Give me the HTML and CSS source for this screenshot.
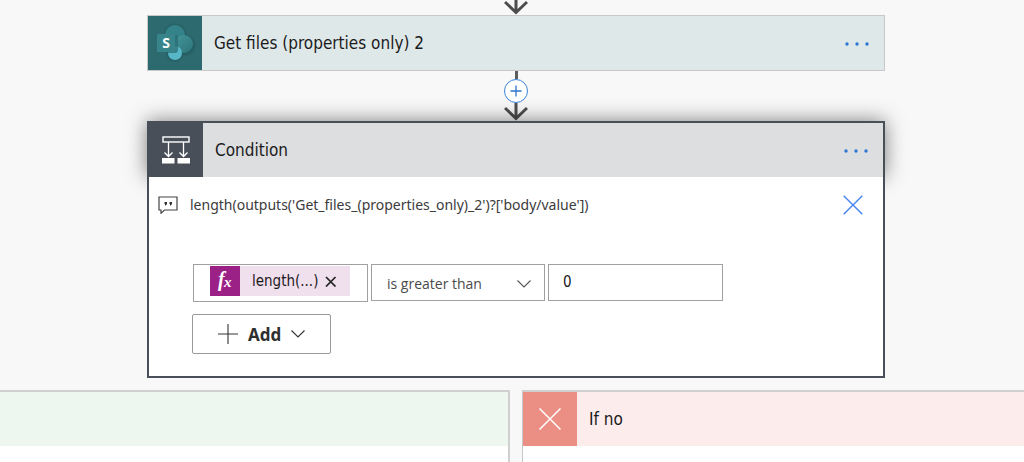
FILE: index.html
```
<!DOCTYPE html>
<html lang="en">
<head>
<meta charset="utf-8">
<title>Flow designer</title>
<link rel="stylesheet" href="styles.css">
</head>
<body>
<main class="flow">
	<svg class="arrow arrow-top" viewBox="0 0 24 15" width="24" height="15">
		<path d="M12 0V13M1 2L12 12.500L23 2"/>
	</svg>

	<section class="card action">
		<header class="card-header">
			<span class="card-icon">
				<svg viewBox="0 0 54 54" width="54" height="54">
					<defs>
						<radialGradient id="glow">
							<stop offset="60%" stop-color="#1d5257" stop-opacity=".7"/>
							<stop offset="100%" stop-color="#1d5257" stop-opacity="0"/>
						</radialGradient>
						<linearGradient id="disc" x1="0" y1="0" x2="1" y2="1">
							<stop offset="0" stop-color="#449599"/>
							<stop offset="1" stop-color="#2c7479"/>
						</linearGradient>
					</defs>
					<circle cx="27" cy="19" r="13" fill="url(#glow)"/>
					<circle cx="37" cy="29" r="12" fill="url(#glow)"/>
					<circle cx="27" cy="37" r="10" fill="url(#glow)"/>
					<circle cx="27" cy="19" r="10" fill="#35838a"/>
					<circle cx="36" cy="28" r="9" fill="url(#disc)"/>
					<circle cx="27" cy="37" r="7" fill="#58b7c6"/>
					<path d="M20 19h10v15q0 3-3 3h-7z" fill="#286970" opacity=".7"/>
					<rect x="9" y="18" width="18" height="18" rx="1" fill="#37858a"/>
					<text class="logo-letter" x="18" y="32">S</text>
				</svg>
			</span>
			<h2 class="card-title">Get files (properties only) 2</h2>
			<button class="icon-button more" aria-label="More commands">
				<svg viewBox="0 0 26 4" width="26" height="4"><circle cx="3" cy="2" r="1.700"/><circle cx="13" cy="2" r="1.700"/><circle cx="23" cy="2" r="1.700"/></svg>
			</button>
		</header>
	</section>

	<div class="connector">
		<span class="line"></span>
		<button class="insert" aria-label="Insert a new step">
			<svg viewBox="0 0 12 12" width="12" height="12"><path d="M6 0.500V11.500M0.500 6H11.500"/></svg>
		</button>
		<svg class="arrow" viewBox="0 0 24 18" width="24" height="18">
			<path d="M12 0V16M1 5L12 15.500L23 5"/>
		</svg>
	</div>

	<section class="card condition">
		<header class="card-header">
			<span class="card-icon">
				<svg viewBox="0 0 28 28" width="28" height="28" fill="none" stroke="#fff">
					<rect x="1" y="1" width="26" height="5" stroke-width="1.4"/>
					<path d="M6.500 6V20M21.500 6V20M2.500 16.500L6.500 20.500L10.500 16.500M17.500 16.500L21.500 20.500L25.500 16.500" stroke-width="1.3"/>
					<path d="M0 22h12.500v5.500H0zM15.500 22H28v5.500H15.500z" fill="#fff" stroke="none"/>
				</svg>
			</span>
			<h2 class="card-title">Condition</h2>
			<button class="icon-button more" aria-label="More commands">
				<svg viewBox="0 0 26 4" width="26" height="4"><circle cx="3" cy="2" r="1.700"/><circle cx="13" cy="2" r="1.700"/><circle cx="23" cy="2" r="1.700"/></svg>
			</button>
		</header>

		<div class="card-body">
			<div class="comment">
				<svg class="comment-icon" viewBox="0 0 20 18" width="20" height="18">
					<path d="M1 1H19V14H6.500L3 17.200V14H1Z" fill="none" stroke="#444" stroke-width="1.2"/>
					<path d="M6.500 6h2.500v2L7.800 9.500H7V8H6.500zM11.500 6H14v2l-1.200 1.500H12V8h-.5z" fill="#333"/>
				</svg>
				<p class="comment-text">length(outputs('Get_files_(properties_only)_2')?['body/value'])</p>
				<button class="icon-button close" aria-label="Delete comment">
					<svg viewBox="0 0 20 20" width="20" height="20"><path d="M0.700 0.700L19.300 19.300M19.300 0.700L0.700 19.300"/></svg>
				</button>
			</div>

			<div class="row">
				<div class="operand">
					<span class="token">
						<span class="fx">
							<svg viewBox="0 0 30 30" width="30" height="30"><text x="8" y="20" font-size="20">f</text><text x="14" y="21" font-size="15">x</text></svg>
						</span>
						<span class="token-name">length(...)</span>
						<button class="icon-button remove" aria-label="Remove token">
							<svg viewBox="0 0 12 12" width="12" height="12"><path d="M1 2L10.500 11.500M10.500 2L1 11.500"/></svg>
						</button>
					</span>
				</div>
				<div class="operator">
					<select aria-label="Operator">
						<option>is greater than</option>
						<option>is less than</option>
						<option>is equal to</option>
					</select>
					<svg class="chevron" viewBox="0 0 14 8" width="14" height="8"><path d="M0.500 0.500L7 7L13.500 0.500"/></svg>
				</div>
				<input class="value" type="text" value="0" aria-label="Value">
			</div>

			<button class="add">
				<svg viewBox="0 0 20 20" width="20" height="20"><path d="M10 0V20M0 10H20"/></svg>
				Add
				<svg class="chevron" viewBox="0 0 14 8" width="14" height="8"><path d="M0.500 0.500L7 7L13.500 0.500"/></svg>
			</button>
		</div>
	</section>
</main>

<div class="branches">
	<section class="branch yes">
		<header class="branch-header"></header>
	</section>
	<section class="branch no">
		<header class="branch-header">
			<span class="branch-icon">
				<svg viewBox="0 0 22 22" width="22" height="22"><path d="M0.500 0.500L21.500 21.500M21.500 0.500L0.500 21.500"/></svg>
			</span>
			<h2 class="card-title">If no</h2>
		</header>
	</section>
</div>
</body>
</html>
```

FILE: styles.css
```
* {
	box-sizing: border-box;
}

body {
	margin: 0;
	min-height: 100vh;
	display: flex;
	flex-direction: column;
	overflow: hidden;
	background: #f8f8f8;
	color: #1b1b1b;
	font-family: "DejaVu Sans Condensed", Tahoma, sans-serif;
	font-size: 17px;
}

button,
select,
input {
	font-family: inherit;
	color: inherit;
}

svg {
	display: block;
	flex: none;
}

/* main column */
.flow {
	display: flex;
	flex-direction: column;
	align-items: center;
	padding-left: 8px;
}

.arrow {
	fill: none;
	stroke: #4d4d4d;
	stroke-width: 3;
}

.connector {
	display: flex;
	flex-direction: column;
	align-items: center;
	height: 50px;
}

.line {
	width: 3px;
	height: 8px;
	background: #5c5c5c;
}

.insert {
	display: flex;
	align-items: center;
	justify-content: center;
	width: 24px;
	height: 24px;
	padding: 0;
	border: 1px solid #3b82dc;
	border-radius: 50%;
	background: #fff;
}

.insert path {
	stroke: #2b73cf;
	stroke-width: 1.3;
}

/* cards */
.card {
	width: 738px;
	max-width: 100%;
}

.card-header {
	display: flex;
	align-items: center;
	padding-right: 14px;
}

.card-icon {
	display: flex;
	align-items: center;
	justify-content: center;
	width: 54px;
	height: 54px;
}

.card-title {
	flex: 1;
	margin: 0;
	padding-left: 12px;
	font-size: 17px;
	line-height: 24px;
	font-weight: 400;
}

.action .card-header {
	border: 1px solid #c8c8c8;
	background: #dfe8e9;
}

.action .card-icon {
	background: #2d6a6f;
}

.logo-letter {
	fill: #fff;
	font-family: "Noto Sans", sans-serif;
	font-size: 14px;
	font-weight: 700;
	text-anchor: middle;
}

.condition .card-header {
	border: 2px solid #484f58;
	border-bottom: 0;
	background: #dddee0;
	box-shadow: 0 0 20px rgba(0, 0, 0, 0.5);
}

.condition .card-icon {
	background: #484f58;
}

.card-body {
	position: relative;
	padding: 14px 16px 22px 9px;
	border: 2px solid #484f58;
	border-top: 0;
	background: #fff;
}

.icon-button {
	display: flex;
	align-items: center;
	justify-content: center;
	padding: 0;
	border: 0;
	background: none;
}

.more {
	width: 26px;
	height: 24px;
	padding-top: 2px;
	fill: #2b76d2;
}

.comment {
	display: flex;
	align-items: center;
	gap: 12px;
	height: 28px;
	padding-right: 4px;
}

.comment-text {
	flex: 1;
	margin: 0;
	font-family: "Noto Sans", sans-serif;
	font-size: 14px;
	line-height: 20px;
	color: #3c3c3c;
}

.close path {
	stroke: #4583f0;
	stroke-width: 1.4;
}

/* condition row */
.row {
	display: flex;
	align-items: flex-start;
	gap: 3px;
	margin: 45px 0 12px 35px;
}

.operand {
	width: 175px;
	height: 38px;
	padding: 1px 16px;
	border: 1px solid #a0a0a0;
}

.token {
	display: flex;
	align-items: center;
	width: 140px;
	height: 30px;
	background: #f0dfed;
}

.fx {
	background: #9c2187;
}

.fx text {
	fill: #fff;
	font-family: "Liberation Serif", serif;
	font-style: italic;
	font-weight: 700;
}

.token-name {
	flex: 1;
	padding-left: 12px;
	font-size: 15px;
	line-height: 20px;
}

.remove {
	margin-right: 13px;
}

.remove path {
	stroke: #222;
	stroke-width: 1.7;
}

.operator {
	position: relative;
	width: 174px;
}

.operator select {
	appearance: none;
	width: 100%;
	height: 37px;
	padding: 1px 36px 0 15px;
	border: 1px solid #a0a0a0;
	border-radius: 0;
	background: #fff;
	font-family: "Open Sans", "Segoe UI", sans-serif;
	font-size: 14px;
	color: #4a4a4a;
}

.chevron {
	fill: none;
	stroke: #555;
	stroke-width: 1.1;
}

.operator .chevron {
	position: absolute;
	right: 14px;
	top: 16px;
	pointer-events: none;
}

.value {
	width: 175px;
	height: 37px;
	padding: 0 14px 2px;
	border: 1px solid #a0a0a0;
	background: #fff;
	font-size: 15px;
}

.add {
	display: flex;
	align-items: center;
	gap: 10px;
	height: 40px;
	margin-left: 34px;
	padding: 0 25px;
	border: 1px solid #999;
	border-radius: 2px;
	background: #fff;
	font-family: "Noto Sans", sans-serif;
	font-size: 17px;
	font-weight: 700;
	color: #2f2f2f;
}

.add path {
	stroke: #333;
	stroke-width: 1.1;
}

/* branches */
.branches {
	flex: 1;
	display: grid;
	grid-template-columns: calc(50% - 2px) 1fr;
	gap: 12px;
	margin-top: 12px;
}

.branch {
	border-top: 2px solid #d0d0d0;
	background: #fff;
}

.branch-header {
	display: flex;
	align-items: center;
	height: 54px;
}

.yes {
	border-right: 2px solid #d0d0d0;
}

.yes .branch-header {
	background: #eef7ef;
}

.no {
	border-left: 1px solid #c8c8c8;
}

.no .branch-header {
	background: #fceceb;
}

.branch-icon {
	display: flex;
	align-items: center;
	justify-content: center;
	width: 54px;
	height: 54px;
	background: #eb8f84;
}

.branch-icon path {
	stroke: #fff;
	stroke-width: 1.5;
}
```
